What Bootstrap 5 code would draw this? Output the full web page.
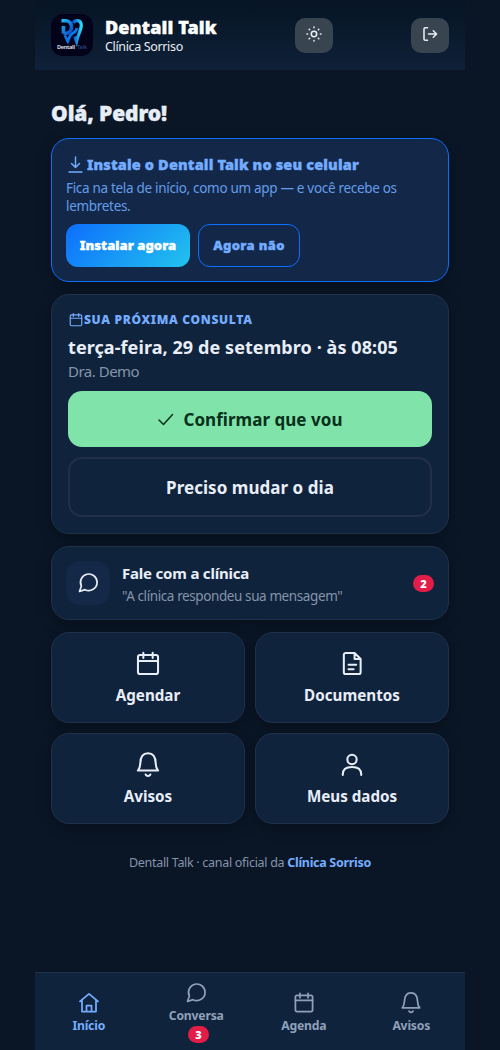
<!DOCTYPE html>
<html lang="pt-BR" data-bs-theme="dark">
<head>
<meta charset="utf-8">
<meta name="viewport" content="width=device-width, initial-scale=1">
<title>Dentall Talk</title>
<link href="https://cdn.jsdelivr.net/npm/bootstrap@5.3.0/dist/css/bootstrap.min.css" rel="stylesheet">
<style>
body{background:#0a1626;color:#e8eef7;font-family:"Noto Sans","Open Sans",sans-serif}
.app{width:430px;height:1050px}
.topo{height:70px;background:linear-gradient(#061423,#0f2139)}
.logo{width:42px;height:42px;border-radius:12px}
.marca{width:112px;white-space:nowrap}
.marca-nome{font-size:18px;font-weight:900;line-height:22px;letter-spacing:.12px;color:#fff}
.marca-sub{font-size:12.5px;line-height:17px;letter-spacing:-.35px;color:#e8edf3}
.marca-nome,.ola,.app-tit .t,.bt{-webkit-text-stroke:.4px currentColor}
.btn-ico{width:38px;height:35px;border-radius:10px;background:#394451;color:#e9edf2}
.btn-ico svg{stroke-width:1.550;margin-top:-2px}
.ola{font-size:21px;font-weight:900;line-height:28px;letter-spacing:-.1px}
.cartao{background:#10233c;border:1px solid #22314a;border-radius:18px;box-shadow:0 4px 14px rgba(0,0,0,.28)}
.cartao-app{background:#132848;border-color:#0d6efd;padding:14px;height:144px;color:#74adff}
.app-tit{font-size:14.5px;font-weight:900;line-height:22px;height:24px;letter-spacing:.14px;white-space:nowrap}
.app-tit .t{margin-top:-2px}
.app-txt{font-size:13.5px;line-height:18px;letter-spacing:-.31px;color:#659ce9;margin:2px 0 9px;white-space:nowrap}
.bt{height:43px;border-radius:12px;font-size:13px;font-weight:900;letter-spacing:.05px;white-space:nowrap;padding:1px 0 0;display:flex;align-items:center;justify-content:center}
.bt-inst{width:124px;color:#fff;background:linear-gradient(135deg,#0d6efd,#22c3ee)}
.bt-nao{width:102px;color:#74adff;border:1px solid #0d6efd;letter-spacing:.35px}
.consulta{padding:16px;height:240px}
.rotulo{font-size:12px;font-weight:900;line-height:17px;letter-spacing:.68px;color:#74adff;white-space:nowrap}
.data{font-size:18px;font-weight:700;line-height:26px;letter-spacing:.08px;margin-top:6px;white-space:nowrap}
.dra{font-size:15px;line-height:20px;letter-spacing:-.5px;color:#8494aa;margin:1px 0 10px}
.acao .t{position:relative;top:1px}
.acao{border-radius:14px;font-size:17px;font-weight:700;letter-spacing:.04px;white-space:nowrap}
.acao-sim{height:56px;background:#80e3aa;color:#06301a}
.acao-mudar{height:60px;border:2px solid #232f49;margin-top:10px}
.fale{height:74px;padding:14px}
.fale-ico{width:44px;height:44px;border-radius:14px;background:#142848}
.fale-tit{font-size:15px;font-weight:700;line-height:21px;letter-spacing:-.2px;padding-top:3px}
.fale-sub{font-size:13.5px;line-height:22px;letter-spacing:-.4px;color:#8494aa;white-space:nowrap}
.fale-sub .t{position:relative;top:1px}
.pill{width:21px;height:17px;border-radius:9px;background:#e11d48;color:#fff;font-size:11px;font-weight:900;line-height:17px;text-align:center}
.grade{display:grid;grid-template-columns:1fr 1fr;gap:10px}
.atalho{height:91px;padding-top:17px;font-size:15.200px;font-weight:700;line-height:22px}
.atalho svg{margin-bottom:6px}
.rodape{font-size:12.500px;line-height:18px;letter-spacing:-.3px;color:#8494aa;margin-top:18px;white-space:nowrap}
.rodape b,.ativo{color:#74adff!important}
.barra{height:78px;background:#10233c;border-top:1px solid #22314a}
.aba{flex:1 1 0;color:#8fa0ba;font-size:12.200px;font-weight:700;line-height:16px;letter-spacing:-.2px;gap:2px}
.aba .t{position:relative;top:1px}
.tr{fill:none;stroke:currentColor;stroke-width:1.750;stroke-linecap:round;stroke-linejoin:round}
.t{display:inline-block;white-space:nowrap}
</style>
</head>
<body>
<svg class="d-none">
<symbol id="cal" viewBox="0 0 24 24"><rect x="3.4" y="4.3" width="17.2" height="16.3" rx="1.8"/><path d="M3.400 9.400h17.200M8 2.400v4.400M16 2.400v4.400"/></symbol>
<symbol id="sino" viewBox="0 0 24 24"><path d="M3.300 16.800h17.400c-1.500-1.600-2-3.200-2.100-6.200C18.500 5 16 1.900 12 1.900S5.500 5 5.400 10.600c-.1 3-.6 4.600-2.100 6.200zM10 20.100a2.200 2.200 0 0 0 4 0"/></symbol>
<symbol id="balao" viewBox="-.6 0 24.600 24.600"><path d="M21 11.500a8.500 8.500 0 0 1-12.400 7.600L3 21l1.900-5.600A8.500 8.500 0 1 1 21 11.500z"/></symbol>
<symbol id="doc" viewBox="0 0 24 24"><path d="M14.200 2.500H6.600a1.600 1.600 0 0 0-1.600 1.600v14.900a1.600 1.600 0 0 0 1.600 1.600h11.200a1.600 1.600 0 0 0 1.600-1.600V7.700zM14.200 2.500v5.200h5.200M9 12.600h6.600M9 16.500h4.400"/></symbol>
<symbol id="pessoa" viewBox="0 0 24 24"><circle cx="12" cy="7.300" r="4"/><path d="M4.100 20.500v-.4c0-4 2.900-6.300 7.900-6.300s7.900 2.300 7.900 6.300v.4"/></symbol>
<symbol id="casa" viewBox="0 0 24 24"><path d="M3 10.400 12 2.900l9 7.500M5 9v11.500h14V9M9.500 20.500v-6h5v6"/></symbol>
</svg>
<div class="app mx-auto d-flex flex-column">
<header class="topo d-flex align-items-center justify-content-between px-3">
  <div class="d-flex align-items-center" style="gap:12px">
    <svg class="logo" viewBox="0 0 42 42">
      <defs><linearGradient id="g" x1="0" x2="1"><stop offset="0" stop-color="#0b4fd8"/><stop offset="1" stop-color="#25dcf5"/></linearGradient>
      <linearGradient id="h" x1="0" x2="1" y2="1"><stop offset="0" stop-color="#22b8f5"/><stop offset="1" stop-color="#0848c8"/></linearGradient></defs>
      <rect width="42" height="42" fill="#02031a"/>
      <path d="M12.500 19.500v-7.500M10.500 6.800h4.500c7.500 0 7.500 12.700-.500 12.700h-2" fill="none" stroke="url(#h)" stroke-width="3.600"/>
      <path d="M13.500 21.500c1.800 1.200 2 4 3.300 6 1.200-3 1.700-6.500 4.700-8 2.500-1.300 4-3 4.500-5.500" fill="none" stroke="#0878e8" stroke-width="2.600"/>
      <path d="M22 9c2-3.500 7.500-3 8.200 1.200C31 15 27.500 18 25.500 27.500l-1.800-5" fill="none" stroke="url(#g)" stroke-width="3.200"/>
      <text x="6" y="35" font-size="5.500" font-weight="600" fill="#e8edf3" textLength="18">Dentall</text><text x="26" y="35" font-size="5.500" fill="#34549b" textLength="10">Talk</text>
    </svg>
    <div class="marca"><div class="marca-nome"><span class="t">Dentall Talk</span></div><div class="marca-sub"><span class="t">Clínica Sorriso</span></div></div>
  </div>
  <div class="btn-ico d-flex align-items-center justify-content-center"><svg width="18" height="18" viewBox="0 0 18 18" class="tr"><circle cx="9" cy="9" r="2.700"/><path d="M9 2v.6M9 15.400v.6M2 9h.6M15.400 9h.6M4.200 4.200l.4.400M13.400 13.400l.4.400M4.200 13.800l.4-.4M13.400 4.600l.4-.4"/></svg></div>
  <div class="btn-ico d-flex align-items-center justify-content-center"><svg width="18" height="18" viewBox="0 0 18 18" class="tr"><path d="M6.500 2.800H4.300a1.300 1.300 0 0 0-1.300 1.300v9.800a1.300 1.300 0 0 0 1.300 1.300h2.200M7.500 9h8M12.300 5.700 15.600 9l-3.300 3.300"/></svg></div>
</header>
<main class="px-3 flex-grow-1 d-flex flex-column" style="padding-top:29px;gap:12px">
  <div class="ola" style="margin-bottom:-1px"><span class="t">Olá, Pedro!</span></div>
  <section class="cartao cartao-app">
    <div class="app-tit d-flex align-items-center"><svg width="21" height="20" viewBox="0 0 21 20" class="tr" style="stroke-width:1.450"><path d="M9.500 2v10M5.500 8.500l4 4 4-4M3 17h13"/></svg><span class="t">Instale o Dentall Talk no seu celular</span></div>
    <div class="app-txt"><span class="t">Fica na tela de início, como um app — e você recebe os</span><br><span class="t">lembretes.</span></div>
    <div class="d-flex gap-2"><div class="bt bt-inst"><span class="t">Instalar agora</span></div><div class="bt bt-nao"><span class="t">Agora não</span></div></div>
  </section>
  <section class="cartao consulta">
    <div class="rotulo d-flex align-items-center"><svg width="16" height="16" class="tr"><use href="#cal"/></svg><span class="t">SUA PRÓXIMA CONSULTA</span></div>
    <div class="data"><span class="t">terça-feira, 29 de setembro · às 08:05</span></div>
    <div class="dra"><span class="t">Dra. Demo</span></div>
    <div class="acao acao-sim d-flex align-items-center justify-content-center"><svg width="18" height="18" viewBox="0 0 18 18" class="tr me-2" style="stroke-width:1.500"><path d="M2 10l4.500 4.500L15.500 4.500"/></svg><span class="t">Confirmar que vou</span></div>
    <div class="acao acao-mudar d-flex align-items-center justify-content-center"><span class="t">Preciso mudar o dia</span></div>
  </section>
  <section class="cartao fale d-flex align-items-center">
    <div class="fale-ico d-flex align-items-center justify-content-center"><svg width="24" height="24" class="tr"><use href="#balao"/></svg></div>
    <div class="flex-grow-1" style="margin-left:12px"><div class="fale-tit"><span class="t">Fale com a clínica</span></div><div class="fale-sub"><span class="t">"A clínica respondeu sua mensagem"</span></div></div>
    <div class="pill">2</div>
  </section>
  <div class="grade">
    <div class="cartao atalho d-flex flex-column align-items-center"><svg width="28" height="28" class="tr"><use href="#cal"/></svg><span class="t">Agendar</span></div>
    <div class="cartao atalho d-flex flex-column align-items-center"><svg width="28" height="28" class="tr"><use href="#doc"/></svg><span class="t">Documentos</span></div>
    <div class="cartao atalho d-flex flex-column align-items-center"><svg width="28" height="28" class="tr"><use href="#sino"/></svg><span class="t">Avisos</span></div>
    <div class="cartao atalho d-flex flex-column align-items-center"><svg width="28" height="28" class="tr"><use href="#pessoa"/></svg><span class="t">Meus dados</span></div>
  </div>
  <div class="rodape text-center"><span class="t">Dentall Talk · canal oficial da <b>Clínica Sorriso</b></span></div>
</main>
<nav class="barra d-flex">
  <div class="aba ativo d-flex flex-column align-items-center justify-content-center"><svg width="24" height="24" class="tr"><use href="#casa"/></svg><span class="t">Início</span></div>
  <div class="aba d-flex flex-column align-items-center justify-content-center"><svg width="24" height="24" class="tr"><use href="#balao"/></svg><span class="t">Conversa</span><div class="pill" style="margin:1px 0 0 4px">3</div></div>
  <div class="aba d-flex flex-column align-items-center justify-content-center"><svg width="24" height="24" class="tr"><use href="#cal"/></svg><span class="t">Agenda</span></div>
  <div class="aba d-flex flex-column align-items-center justify-content-center"><svg width="24" height="24" class="tr"><use href="#sino"/></svg><span class="t">Avisos</span></div>
</nav>
</div>
<script src="https://cdn.jsdelivr.net/npm/bootstrap@5.3.0/dist/js/bootstrap.bundle.min.js"></script>
</body>
</html>
